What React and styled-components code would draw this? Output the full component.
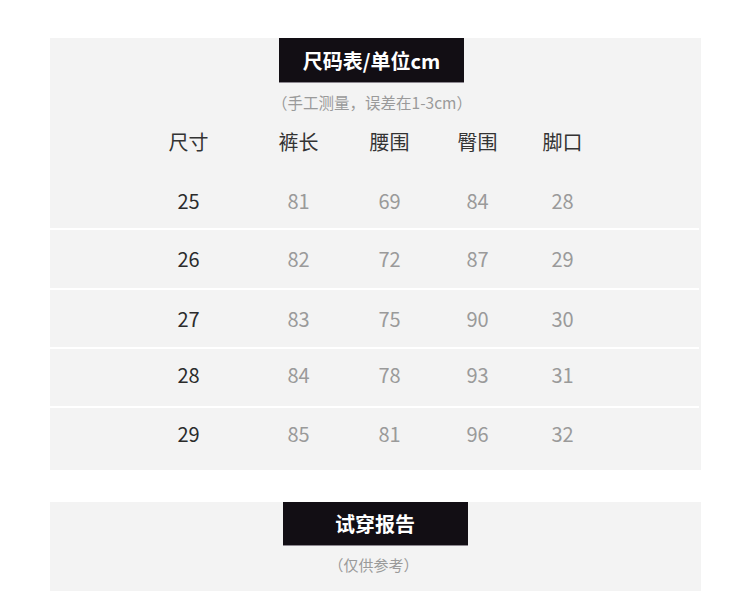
import styled, { createGlobalStyle } from "styled-components";

const GlobalStyle = createGlobalStyle`
  *, *::before, *::after {
    box-sizing: border-box;
  }
  body {
    margin: 0;
    background: #ffffff;
    font-family: "Noto Sans CJK SC", "Noto Sans", sans-serif;
  }
`;

const Page = styled.div`
  width: 750px;
  padding-top: 38px;
  display: flex;
  flex-direction: column;
  align-items: center;
  gap: 32px;
`;

const Panel = styled.div`
  width: 651px;
  background-color: #f3f3f3;
  display: flex;
  flex-direction: column;
  align-items: center;
  padding-bottom: ${(p) => p.$bottom || 0}px;
`;

const TitleBox = styled.div`
  width: 185px;
  height: ${(p) => p.$height}px;
  margin-left: ${(p) => p.$shift || 0}px;
  background-color: #120e14;
  box-shadow: 0 1px 0 #8d8890;
  color: #ffffff;
  font-size: 20px;
  font-weight: 700;
  display: flex;
  align-items: center;
  justify-content: center;
`;

const Note = styled.div`
  margin-top: ${(p) => p.$top}px;
  margin-left: ${(p) => p.$shift || 0}px;
  font-size: ${(p) => p.$size}px;
  line-height: 19px;
  color: #9a9a9a;
`;

const Table = styled.div`
  width: 100%;
  display: flex;
  flex-direction: column;
`;

const Row = styled.div`
  display: grid;
  grid-template-columns: 110px 110px 72px 104px 66px;
  padding-left: 84px;
  height: ${(p) => p.$height}px;
  align-items: center;
  border-top: ${(p) => (p.$line ? "2px solid #ffffff" : "none")};
  margin-right: 2px;
  font-size: 20px;
  padding-top: ${(p) => p.$padTop || 0}px;
  padding-bottom: ${(p) => p.$pad || 0}px;
`;

const Cell = styled.div`
  text-align: center;
  color: ${(p) => (p.$dark ? "#2b2b2b" : "#9a9a9a")};
  line-height: 24px;
`;

const HeadCell = styled(Cell)`
  color: #333333;
`;

const headers = ["尺寸", "裤长", "腰围", "臀围", "脚口"];

const rows = [
  ["25", "81", "69", "84", "28"],
  ["26", "82", "72", "87", "29"],
  ["27", "83", "75", "90", "30"],
  ["28", "84", "78", "93", "31"],
  ["29", "85", "81", "96", "32"],
];

const heights = [58, 60, 59, 59, 64];
const padTops = [4, 0, 0, 0, 0];
const padBottoms = [0, 0, 0, 5, 10];

export default function App() {
  return (
    <>
      <GlobalStyle />
      <Page>
        <Panel>
          <TitleBox $height={44} $shift={-7}>尺码表/单位cm</TitleBox>
          <Note $top={11} $size={15.5} $shift={-6}>（手工测量，误差在1-3cm）</Note>
          <Table>
            <Row $height={58} $padTop={2}>
              {headers.map((h) => (
                <HeadCell key={h}>{h}</HeadCell>
              ))}
            </Row>
            {rows.map((r, i) => (
              <Row
                key={r[0]}
                $line={i > 0}
                $height={heights[i]}
                $padTop={padTops[i]}
                $pad={padBottoms[i]}
              >
                {r.map((v, j) => (
                  <Cell key={j} $dark={j === 0}>
                    {v}
                  </Cell>
                ))}
              </Row>
            ))}
          </Table>
        </Panel>
        <Panel $bottom={30}>
          <TitleBox $height={43}>试穿报告</TitleBox>
          <Note $top={10} $size={15} $shift={-3}>（仅供参考）</Note>
        </Panel>
      </Page>
    </>
  );
}
